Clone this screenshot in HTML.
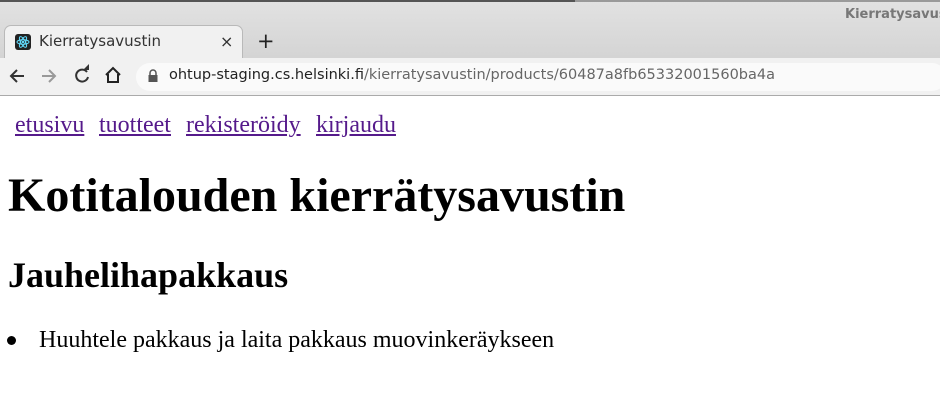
<!DOCTYPE html>
<html><head><meta charset="utf-8"><style>
*{margin:0;padding:0;box-sizing:border-box}
body{width:940px;height:405px;overflow:hidden;background:#fff;position:relative;font-family:"Liberation Serif",serif}
.abs{position:absolute}
.ui{font-family:"DejaVu Sans","Liberation Sans",sans-serif}
a{color:#551a8b;text-decoration:underline;position:absolute;top:0}
</style></head><body>
<div class="abs" style="left:0;top:0;width:940px;height:58px;background:linear-gradient(#e2e2e2,#d4d4d4)"></div>
<div class="abs" style="left:0;top:0;width:575px;height:2px;background:#555"></div>
<div class="abs" style="left:575px;top:0;width:365px;height:2px;background:#9a9a9a"></div>
<div class="abs ui" style="left:845px;top:7px;font-size:13px;font-weight:bold;color:#777;white-space:nowrap">Kierratysavustin</div>
<div class="abs" style="left:4px;top:25px;width:239px;height:36px;background:#f1f1f1;border:1px solid #b9b9b9;border-bottom:none;border-radius:7px 7px 0 0"></div>
<div class="abs" style="left:15px;top:34px;width:16px;height:16px;background:#222;border-radius:3px">
<svg width="16" height="16" viewBox="0 0 16 16"><g fill="none" stroke="#61dafb" stroke-width="1"><ellipse cx="8" cy="8" rx="6" ry="2.3"/><ellipse cx="8" cy="8" rx="6" ry="2.3" transform="rotate(60 8 8)"/><ellipse cx="8" cy="8" rx="6" ry="2.3" transform="rotate(120 8 8)"/></g><circle cx="8" cy="8" r="1.2" fill="#61dafb"/></svg></div>
<div class="abs ui" style="left:39px;top:32px;font-size:15px;color:#333">Kierratysavustin</div>
<div class="abs ui" style="left:220px;top:32px;font-size:16px;color:#333">×</div>
<div class="abs ui" style="left:257px;top:29px;font-size:21px;color:#222">+</div>
<div class="abs" style="left:0;top:58px;width:940px;height:38px;background:#f1f1f1;border-bottom:1px solid #aaa"></div>
<svg class="abs" style="left:0;top:58px" width="135" height="38" viewBox="0 0 135 38">
<g fill="none" stroke="#333" stroke-width="2"><path d="M24 18H11M17 12l-6 6 6 6"/></g>
<g fill="none" stroke="#999" stroke-width="2"><path d="M42 18h13M49 12l6 6-6 6"/></g>
<path d="M87 14a6 6 0 1 0 1 5" fill="none" stroke="#333" stroke-width="2"/><path d="M83 12h6v-6z" fill="#333"/>
<path d="M106 17l7-7 7 7M108 16v8h10v-8" fill="none" stroke="#222" stroke-width="2"/>
</svg>
<div class="abs" style="left:136px;top:63px;width:810px;height:28px;background:#fafafa;border-radius:14px"></div>
<svg class="abs" style="left:147px;top:69px" width="12" height="14"><path d="M3 6V4a3 3 0 0 1 6 0v2" fill="none" stroke="#555" stroke-width="1.5"/><rect x="1.5" y="6" width="9" height="7" fill="#555"/></svg>
<div class="abs ui" style="left:169px;top:67px;font-size:14.5px;color:#222;white-space:nowrap">ohtup-staging.cs.helsinki.fi<span style="color:#666">/kierratysavustin/products/60487a8fb65332001560ba4a</span></div>
<div class="abs" style="left:0;top:112px;width:500px;font-size:24px;white-space:nowrap"><a style="left:15px">etusivu</a><a style="left:99px">tuotteet</a><a style="left:186px">rekisteröidy</a><a style="left:316px">kirjaudu</a></div>
<div class="abs" style="left:8px;top:168px;font-size:48px;font-weight:bold;white-space:nowrap">Kotitalouden kierrätysavustin</div>
<div class="abs" style="left:8px;top:254px;font-size:36px;font-weight:bold;white-space:nowrap">Jauhelihapakkaus</div>
<div class="abs" style="left:7px;top:336px;width:9px;height:9px;border-radius:50%;background:#000"></div>
<div class="abs" style="left:39px;top:327px;font-size:24px;white-space:nowrap">Huuhtele pakkaus ja laita pakkaus muovinkeräykseen</div>
</body></html>
